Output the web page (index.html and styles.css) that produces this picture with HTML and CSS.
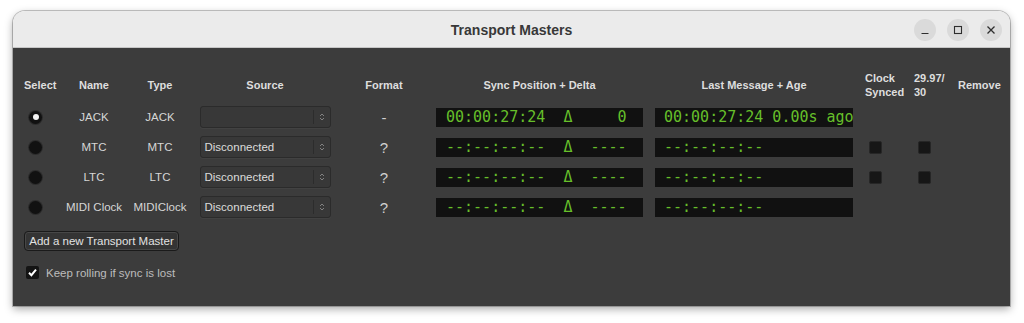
FILE: index.html
```html
<!DOCTYPE html>
<html lang="en">
<head>
<meta charset="utf-8">
<title>Transport Masters</title>
<link rel="stylesheet" href="styles.css">
</head>
<body>
<div class="window">
  <div class="titlebar">
    <div class="title">Transport Masters</div>
    <div class="wm-buttons">
      <span class="wm-btn"><svg width="10" height="10" viewBox="0 0 10 10"><path d="M1.5 8.5 H8.5" stroke="#2e2e2e" stroke-width="1.2"/></svg></span>
      <span class="wm-btn"><svg width="10" height="10" viewBox="0 0 10 10"><rect x="1.5" y="1.5" width="7" height="7" fill="none" stroke="#2e2e2e" stroke-width="1.1"/></svg></span>
      <span class="wm-btn"><svg width="10" height="10" viewBox="0 0 10 10"><path d="M1.5 1.5 L8.5 8.5 M8.5 1.5 L1.5 8.5" stroke="#2e2e2e" stroke-width="1.3"/></svg></span>
    </div>
  </div>
  <div class="content">
    <div class="table">
      <div class="hd hd-left">Select</div>
      <div class="hd">Name</div>
      <div class="hd">Type</div>
      <div class="hd">Source</div>
      <div class="hd">Format</div>
      <div class="hd">Sync Position + Delta</div>
      <div class="hd">Last Message + Age</div>
      <div class="hd hd-left hd-pad">Clock<br>Synced</div>
      <div class="hd hd-left hd-pad">29.97/<br>30</div>
      <div class="hd hd-left hd-pad">Remove</div>

      <!-- JACK -->
      <div class="cell cell-left"><span class="radio on"></span></div>
      <div class="cell">JACK</div>
      <div class="cell">JACK</div>
      <div class="cell"><div class="combo"><span class="combo-text"></span><span class="combo-arrow"><svg width="6" height="10" viewBox="0 0 6 10"><path d="M1 4 L3 2 L5 4 M1 6 L3 8 L5 6" fill="none" stroke="#8a8a8a" stroke-width="0.9"/></svg></span></div></div>
      <div class="cell fmt">-</div>
      <div class="cell"><div class="clock sync">00:00:27:24  Δ     0</div></div>
      <div class="cell"><div class="clock last">00:00:27:24 0.00s ago</div></div>
      <div class="cell cell-left"></div>
      <div class="cell cell-left"></div>
      <div class="cell"></div>

      <!-- MTC -->
      <div class="cell cell-left"><span class="radio"></span></div>
      <div class="cell">MTC</div>
      <div class="cell">MTC</div>
      <div class="cell"><div class="combo"><span class="combo-text">Disconnected</span><span class="combo-arrow"><svg width="6" height="10" viewBox="0 0 6 10"><path d="M1 4 L3 2 L5 4 M1 6 L3 8 L5 6" fill="none" stroke="#8a8a8a" stroke-width="0.9"/></svg></span></div></div>
      <div class="cell fmt">?</div>
      <div class="cell"><div class="clock sync">--:--:--:--  Δ  ----</div></div>
      <div class="cell"><div class="clock last">--:--:--:--</div></div>
      <div class="cell cell-left"><span class="check"></span></div>
      <div class="cell cell-left"><span class="check"></span></div>
      <div class="cell"></div>

      <!-- LTC -->
      <div class="cell cell-left"><span class="radio"></span></div>
      <div class="cell">LTC</div>
      <div class="cell">LTC</div>
      <div class="cell"><div class="combo"><span class="combo-text">Disconnected</span><span class="combo-arrow"><svg width="6" height="10" viewBox="0 0 6 10"><path d="M1 4 L3 2 L5 4 M1 6 L3 8 L5 6" fill="none" stroke="#8a8a8a" stroke-width="0.9"/></svg></span></div></div>
      <div class="cell fmt">?</div>
      <div class="cell"><div class="clock sync">--:--:--:--  Δ  ----</div></div>
      <div class="cell"><div class="clock last">--:--:--:--</div></div>
      <div class="cell cell-left"><span class="check"></span></div>
      <div class="cell cell-left"><span class="check"></span></div>
      <div class="cell"></div>

      <!-- MIDI Clock -->
      <div class="cell cell-left"><span class="radio"></span></div>
      <div class="cell">MIDI Clock</div>
      <div class="cell">MIDIClock</div>
      <div class="cell"><div class="combo"><span class="combo-text">Disconnected</span><span class="combo-arrow"><svg width="6" height="10" viewBox="0 0 6 10"><path d="M1 4 L3 2 L5 4 M1 6 L3 8 L5 6" fill="none" stroke="#8a8a8a" stroke-width="0.9"/></svg></span></div></div>
      <div class="cell fmt">?</div>
      <div class="cell"><div class="clock sync">--:--:--:--  Δ  ----</div></div>
      <div class="cell"><div class="clock last">--:--:--:--</div></div>
      <div class="cell cell-left"></div>
      <div class="cell cell-left"></div>
      <div class="cell"></div>
    </div>

    <button class="add-btn">Add a new Transport Master</button>

    <label class="keep">
      <span class="check checked"><svg width="13" height="13" viewBox="0 0 13 13"><path d="M3 6.8 L5.4 9.2 L10 3.6" fill="none" stroke="#ffffff" stroke-width="2"/></svg></span>
      <span class="keep-text">Keep rolling if sync is lost</span>
    </label>
  </div>
</div>
</body>
</html>
```
FILE: styles.css
```css
html, body {
  margin: 0;
  padding: 0;
  background: #ffffff;
}
body {
  font-family: "Liberation Sans", Arial, sans-serif;
  width: 1024px;
  height: 323px;
  overflow: hidden;
}
.window {
  margin: 11px 14px 0 13px;
  height: 295px;
  border-radius: 12px 12px 0 0;
  box-shadow: 0 0 0 1px rgba(0,0,0,0.22), 0 3px 9px rgba(0,0,0,0.35);
  display: flex;
  flex-direction: column;
  overflow: hidden;
}
.titlebar {
  height: 36px;
  background: #ebebeb;
  border-bottom: 1px solid #c6c6c6;
  display: flex;
  align-items: center;
  justify-content: center;
  position: relative;
  flex: none;
}
.title {
  font-size: 14px;
  font-weight: bold;
  color: #383838;
  margin-top: 2px;
}
.wm-buttons {
  position: absolute;
  right: 8px;
  top: 8px;
  display: flex;
  gap: 11px;
}
.wm-btn {
  width: 22px;
  height: 22px;
  border-radius: 50%;
  background: #dadada;
  display: flex;
  align-items: center;
  justify-content: center;
}
.content {
  flex: 1;
  background: #3c3c3c;
  padding: 23px 0 0 11px;
  display: flex;
  flex-direction: column;
  align-items: flex-start;
}
.table {
  display: grid;
  grid-template-columns: 36px 68px 64px 146px 92px 219px 210px 49px 44px 54px;
  grid-template-rows: 31px 30px 30px 30px 30px;
}
.hd {
  height: 28px;
  align-self: start;
  display: flex;
  align-items: center;
  justify-content: center;
  font-size: 11px;
  font-weight: bold;
  color: #dedede;
  line-height: 14px;
  white-space: nowrap;
}
.hd-left {
  justify-content: flex-start;
}
.hd-pad {
  padding-left: 6px;
}
.cell {
  display: flex;
  align-items: center;
  justify-content: center;
  font-size: 11.5px;
  color: #d6d6d6;
  white-space: nowrap;
}
.cell-left {
  justify-content: flex-start;
}
.fmt {
  font-size: 15px;
  color: #d0d0d0;
}
.radio {
  width: 13px;
  height: 13px;
  margin-left: 5px;
  border-radius: 50%;
  background: #111111;
  box-shadow: 0 0 0 1px #2c2c2c;
  display: flex;
  align-items: center;
  justify-content: center;
}
.radio.on::after {
  content: "";
  width: 6px;
  height: 6px;
  border-radius: 50%;
  background: #f2f2f2;
}
.combo {
  width: 131px;
  height: 22px;
  box-sizing: border-box;
  background: #383838;
  border: 1px solid #2b2b2b;
  border-radius: 3px;
  box-shadow: 0 1px 0 rgba(255,255,255,0.03);
  display: flex;
  align-items: center;
}
.combo-text {
  flex: 1;
  padding-left: 4px;
  font-size: 11.5px;
  color: #dcdcdc;
}
.combo-arrow {
  width: 16px;
  height: 14px;
  border-left: 1px solid #2c2c2c;
  display: flex;
  align-items: center;
  justify-content: center;
}
.clock {
  height: 19px;
  box-sizing: border-box;
  background: #111111;
  color: #66bf2a;
  font-family: "DejaVu Sans Mono", "Liberation Mono", monospace;
  font-size: 15px;
  line-height: 19px;
  white-space: pre;
  overflow: hidden;
}
.clock.sync {
  width: 207px;
  padding-left: 10px;
}
.clock.last {
  width: 198px;
  padding-left: 9px;
}
.check {
  width: 13px;
  height: 13px;
  margin-left: 10px;
  box-sizing: border-box;
  background: #161616;
  border: 1px solid #262626;
  border-radius: 2px;
  display: flex;
}
.add-btn {
  margin: 9px 0 0 0;
  width: 155px;
  height: 20px;
  padding: 0;
  box-sizing: border-box;
  background: #343434;
  border: 1px solid #1a1a1a;
  border-radius: 4px;
  box-shadow: inset 0 0 0 1px #474747;
  color: #e2e2e2;
  font-family: "Liberation Sans", Arial, sans-serif;
  font-size: 11.5px;
  line-height: 18px;
}
.keep {
  margin-top: 15px;
  margin-left: 2px;
  display: flex;
  align-items: center;
  height: 13px;
}
.keep .check {
  margin-left: 0;
  border: none;
  background: #141414;
}
.keep-text {
  margin-left: 7px;
  font-size: 11.5px;
  color: #bdbdbd;
}
```
